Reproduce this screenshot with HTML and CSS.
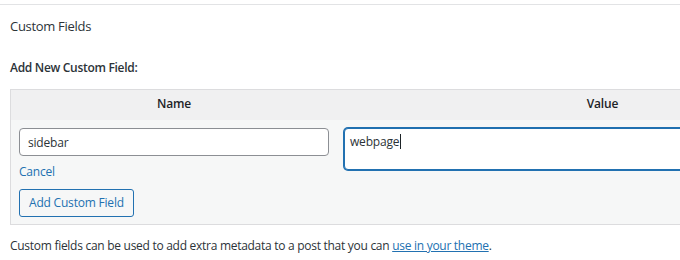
FILE: index.html
```html
<!DOCTYPE html>
<html>
<head>
<meta charset="utf-8">
<link rel="stylesheet" href="styles.css">
</head>
<body>
<div class="postbox">
  <h2 class="box-title">Custom Fields</h2>
  <div class="inside">
    <p class="add-label">Add New Custom Field:</p>
    <div class="meta-table">
      <div class="th">Name</div>
      <div class="th">Value</div>
      <div class="td td-left">
        <input class="text-input" type="text" value="sidebar">
        <a class="cancel" href="#">Cancel</a>
        <button class="btn">Add Custom Field</button>
      </div>
      <div class="td td-right">
        <div class="textarea"><span>webpage</span><span class="caret"></span></div>
      </div>
    </div>
    <p class="note">Custom fields can be used to add extra metadata to a post that you can <a href="#">use in your theme</a>.</p>
  </div>
</div>
</body>
</html>
```

FILE: styles.css
```css
html, body {
  margin: 0;
  padding: 0;
  background: #fff;
  overflow: hidden;
  width: 680px;
  height: 260px;
}
body {
  font-family: "Open Sans", "Noto Sans", sans-serif;
  font-size: 12px;
  letter-spacing: -0.2px;
  color: #3c434a;
}
.postbox {
  margin-top: 4px;
  border-top: 1px solid #e2e3e5;
  width: 900px;
}
.box-title {
  margin: 0;
  padding: 11px 10px 0;
  font-size: 13px;
  font-weight: 400;
  line-height: 20px;
  letter-spacing: -0.3px;
  color: #2c3338;
}
.inside {
  padding: 0 10px;
}
.add-label {
  margin: 22px 0 0;
  line-height: 20px;
  font-weight: 600;
  letter-spacing: -0.3px;
  color: #2c3338;
}
.meta-table {
  margin-top: 11px;
  width: 857px;
  display: grid;
  grid-template-columns: 326px 1fr;
  border: 1px solid #dcdcde;
}
.th {
  background: #f0f0f1;
  height: 30px;
  line-height: 28px;
  text-align: center;
  font-weight: 600;
  color: #1d2327;
}
.td {
  background: #f6f7f7;
  padding: 8px 8px 7px;
}
.td-left {
  display: flex;
  flex-direction: column;
  align-items: flex-start;
}
.text-input {
  box-sizing: border-box;
  width: 310px;
  height: 28px;
  margin: 0;
  padding: 0 8px;
  border: 1px solid #8c8f94;
  border-radius: 4px;
  background: #fff;
  font: inherit;
  letter-spacing: inherit;
  color: #2c3338;
}
.cancel {
  margin-top: 7px;
  line-height: 18px;
  color: #2271b1;
  text-decoration: none;
}
.btn {
  box-sizing: border-box;
  margin-top: 8px;
  height: 28px;
  padding: 0 9px;
  border: 1px solid #2271b1;
  border-radius: 3px;
  background: #f6f7f7;
  color: #2271b1;
  font: inherit;
  letter-spacing: inherit;
  line-height: 26px;
}
.td-right {
  padding-left: 7px;
}
.textarea {
  box-sizing: border-box;
  height: 42px;
  padding: 4px 5px;
  border: 1px solid #2271b1;
  box-shadow: 0 0 0 1px #2271b1;
  border-radius: 4px;
  background: #fff;
  line-height: 18px;
  color: #2c3338;
}
.caret {
  display: inline-block;
  width: 1px;
  height: 15px;
  background: #1d2327;
  vertical-align: -3px;
  margin-left: 1px;
}
.note {
  margin: 12px 0 0;
  line-height: 18px;
  letter-spacing: -0.28px;
  color: #2c3338;
}
.note a {
  color: #2271b1;
  text-decoration: underline;
}
```
